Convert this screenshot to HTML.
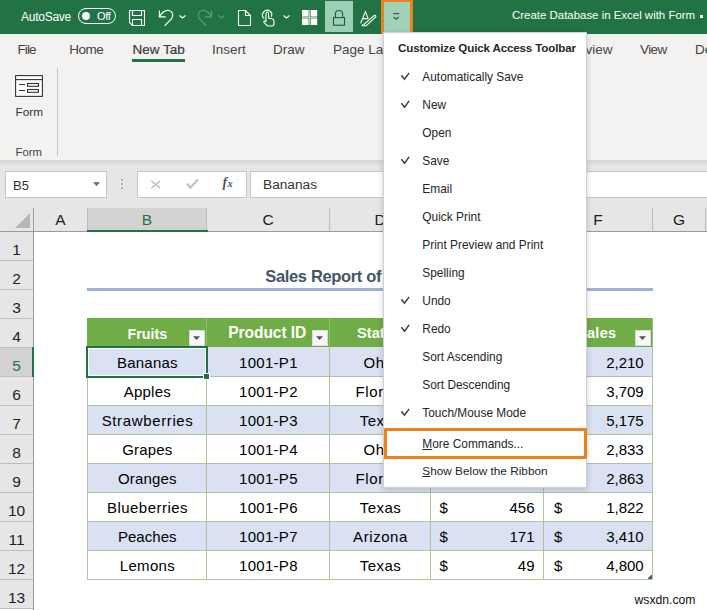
<!DOCTYPE html><html><head><meta charset="utf-8"><style>
html,body{margin:0;padding:0;}
body{width:707px;height:610px;overflow:hidden;position:relative;background:#fff;font-family:"Liberation Sans", sans-serif;}
.t{position:absolute;white-space:nowrap;line-height:1;}
.b{position:absolute;box-sizing:border-box;}
svg{position:absolute;overflow:visible;}
</style></head><body>
<div class="b" style="left:0px;top:0px;width:707px;height:34px;background:#217346"></div>
<div class="t" style="left:21px;top:11.00px;font-size:12px;color:#fff;font-weight:normal;letter-spacing:-0.25px">AutoSave</div>
<div class="b" style="left:78px;top:8px;width:38px;height:16px;border:1.3px solid #fff;border-radius:8px"></div>
<div class="b" style="left:82px;top:12px;width:8px;height:8px;background:#fff;border-radius:50%"></div>
<div class="t" style="left:97px;top:10.95px;font-size:11px;color:#fff;font-weight:normal;letter-spacing:-0.3px">Off</div>
<svg style="left:0;top:0" width="707" height="34">
<g fill="none" stroke="#fff" stroke-width="1.1">
<path d="M129.5 10.5 H144.5 V25.5 H132.5 L129.5 22.5 Z"/>
<path d="M132.5 10.5 V15.5 H141.5 V10.5"/>
<path d="M132.5 25.5 V19.5 H141.5 V25.5"/>
</g>
<g fill="none" stroke="#fff" stroke-width="1.2">
<path d="M159.4 10.6 V16.8 H165.8"/>
<path d="M159.7 16.5 C162 12.5 165.5 10.2 168.8 10.5 C172.6 11 174 15.5 171.6 18.6 L164.6 25.9"/>
<path d="M179.5 15.5 L182.5 18 L185.5 15.5"/>
</g>
<g fill="none" stroke="#55a077" stroke-width="1.2">
<path d="M211.6 10.6 V16.8 H205.2"/>
<path d="M211.3 16.5 C209 12.5 205.5 10.2 202.2 10.5 C198.4 11 197 15.5 199.4 18.6 L206.4 25.9"/>
<path d="M218.5 15.5 L221.5 18 L224.5 15.5"/>
</g>
<g fill="none" stroke="#fff" stroke-width="1.1">
<path d="M238.5 10.5 H245.5 L250.5 15.5 V25.5 H238.5 Z"/>
<path d="M245.5 10.5 V15.5 H250.5"/>
</g>
<g fill="none" stroke="#fff" stroke-width="1.1">
<path d="M264.3 18.5 A4.6 4.6 0 1 1 271.3 16.8"/>
<path d="M266 22 V13.2 C266 11.6 268.6 11.6 268.6 13.2 V18 L272 18.8 C273.5 19.1 274 20 274 21.3 V23.8 C274 25.3 273 26 271.8 26 H267.6 L264.2 22.6 C263.2 21.6 264.6 20.2 266 21.4"/>
<path d="M283.5 15.5 L286.5 18 L289.5 15.5"/>
</g>
<g fill="#fff">
<rect x="302" y="10" width="6.6" height="6.6"/><rect x="310.6" y="10" width="6.6" height="6.6"/>
<rect x="302" y="18.4" width="6.6" height="6.6"/><rect x="310.6" y="18.4" width="6.6" height="6.6"/>
<rect x="309.2" y="10" width="0.8" height="15" opacity="0.8"/><rect x="302" y="17.1" width="15.2" height="0.8" opacity="0.8"/>
</g>
</svg>
<div class="b" style="left:325px;top:1px;width:28px;height:31px;background:#9ccfb3"></div>
<svg style="left:0;top:0" width="707" height="34">
<g fill="none" stroke="#1f5c3a" stroke-width="1.1">
<rect x="333.5" y="17.6" width="11" height="7.6"/>
<path d="M335.4 17.6 V14 C335.4 9.4 342.6 9.4 342.6 14 V17.6"/>
</g>
<g fill="none" stroke="#fff" stroke-width="1.1">
<path d="M360.6 23.4 L365.4 11.6 L368.2 18.6 M362.8 18.6 H368.4"/>
<path d="M364.2 24.2 L374 15.6 C375.2 14.7 376.4 15.6 375.6 16.9 L366.6 25.4 C365.4 26.3 363.6 25.4 364.2 24.2 Z"/>
<path d="M363.2 24.6 C361.5 24.8 361.8 25.9 364 26.2"/>
</g>
</svg>
<div class="b" style="left:381px;top:-1px;width:32px;height:36.5px;background:#9fd2b6;border:3px solid #f0801e;border-radius:2px"></div>
<svg style="left:0;top:0" width="707" height="34">
<g fill="none" stroke="#1f5c3a" stroke-width="1.1">
<path d="M393.2 13.6 H399.2"/>
<path d="M393.6 16.8 L396.2 19.2 L398.8 16.8"/>
</g></svg>
<div class="t" style="left:512px;top:9.87px;font-size:11.45px;color:#fff;font-weight:normal;">Create Database in Excel with Form</div>
<div class="b" style="left:700px;top:15px;width:3px;height:3px;background:#fff"></div>
<div class="b" style="left:0px;top:34px;width:707px;height:126px;background:#f3f2f1"></div>
<div class="t" style="right:94.5px;top:42.92px;font-size:13.5px;color:#444;font-weight:normal;text-align:right;">Review</div>
<div class="t" style="left:17.5px;top:42.92px;font-size:13.5px;color:#444;font-weight:normal;letter-spacing:-0.9px">File</div>
<div class="t" style="left:69.3px;top:42.92px;font-size:13.5px;color:#444;font-weight:normal;letter-spacing:-0.5px">Home</div>
<div class="t" style="left:132.4px;top:42.92px;font-size:13.5px;color:#3a3a3a;font-weight:normal;-webkit-text-stroke:0.2px #3a3a3a">New Tab</div>
<div class="t" style="left:212px;top:42.92px;font-size:13.5px;color:#444;font-weight:normal;">Insert</div>
<div class="t" style="left:273px;top:42.92px;font-size:13.5px;color:#444;font-weight:normal;">Draw</div>
<div class="t" style="left:333px;top:42.92px;font-size:13.5px;color:#444;font-weight:normal;">Page Layout</div>
<div class="t" style="left:640px;top:42.92px;font-size:13.5px;color:#444;font-weight:normal;letter-spacing:-0.6px">View</div>
<div class="t" style="left:695px;top:42.92px;font-size:13.5px;color:#444;font-weight:normal;">Developer</div>
<div class="b" style="left:132px;top:59px;width:53px;height:3px;background:#217346"></div>
<svg style="left:0;top:0" width="707" height="170">
<g fill="#fff" stroke="#333" stroke-width="1.1">
<rect x="15.6" y="75.6" width="26.8" height="20.8"/>
<path d="M15.6 79.6 H42.4"/>
<path d="M19 84.5 H25 M19 90.5 H25"/>
<rect x="27.6" y="83.5" width="10.8" height="2.8"/>
<rect x="27.6" y="89.5" width="10.8" height="2.8"/>
</g></svg>
<div class="t" style="left:15.5px;top:106.77px;font-size:11.8px;color:#333;font-weight:normal;">Form</div>
<div class="t" style="left:15.5px;top:146.50px;font-size:11.3px;color:#444;font-weight:normal;">Form</div>
<div class="b" style="left:57px;top:68px;width:1px;height:88px;background:#c8c6c4"></div>
<div class="b" style="left:0px;top:160px;width:707px;height:71px;background:#e6e6e6"></div>
<div class="b" style="left:0px;top:160px;width:707px;height:6px;background:linear-gradient(#d4d4d4,#e6e6e6)"></div>
<div class="b" style="left:5px;top:171px;width:102px;height:27px;background:#fff;border:1px solid #c6c6c6"></div>
<div class="t" style="left:13px;top:178.95px;font-size:13px;color:#333;font-weight:normal;">B5</div>
<svg style="left:0;top:0" width="707" height="240">
<path d="M93 182.2 H100 L96.5 186 Z" fill="#666"/>
<g fill="#999"><circle cx="122" cy="180" r="0.9"/><circle cx="122" cy="184" r="0.9"/><circle cx="122" cy="188" r="0.9"/></g>
</svg>
<div class="b" style="left:137px;top:171px;width:110px;height:27px;background:#fff;border:1px solid #c6c6c6"></div>
<svg style="left:0;top:0" width="707" height="240">
<g fill="none" stroke="#c3c3c3" stroke-width="1.6">
<path d="M151.2 180.8 L160.2 188.2 M160.2 180.8 L151.2 188.2" stroke-width="1.6"/>
<path d="M186.8 183.6 L190.4 187.6 L198 179.6" stroke-width="2.2"/>
</g></svg>
<div class="t" style="left:222.5px;top:175.90px;font-size:14px;color:#555;font-weight:normal;font-family:'Liberation Serif',serif"><b><i>f</i></b></div>
<div class="t" style="left:227.6px;top:178.88px;font-size:10.5px;color:#555;font-weight:normal;font-family:'Liberation Serif',serif"><b><i>x</i></b></div>
<div class="b" style="left:250px;top:171px;width:460px;height:27px;background:#fff;border:1px solid #c6c6c6"></div>
<div class="t" style="left:263px;top:178.35px;font-size:13.7px;color:#333;font-weight:normal;">Bananas</div>
<div class="b" style="left:0px;top:208px;width:33px;height:23px;background:#e6e6e6"></div>
<div class="b" style="left:33px;top:208px;width:54px;height:23px;background:#e6e6e6"></div>
<div class="b" style="left:87px;top:208px;width:119px;height:23px;background:#d2d2d2"></div>
<div class="b" style="left:206px;top:208px;width:123px;height:23px;background:#e6e6e6"></div>
<div class="b" style="left:329px;top:208px;width:101px;height:23px;background:#e6e6e6"></div>
<div class="b" style="left:430px;top:208px;width:113px;height:23px;background:#e6e6e6"></div>
<div class="b" style="left:543px;top:208px;width:109px;height:23px;background:#e6e6e6"></div>
<div class="b" style="left:652px;top:208px;width:53px;height:23px;background:#e6e6e6"></div>
<div class="b" style="left:705px;top:208px;width:55px;height:23px;background:#e6e6e6"></div>
<div class="b" style="left:33px;top:208px;width:1px;height:23px;background:#9b9b9b"></div>
<div class="b" style="left:87px;top:208px;width:1px;height:23px;background:#bdbdbd"></div>
<div class="t" style="left:33.5px;width:54.0px;text-align:center;top:211.82px;font-size:15.5px;color:#222;font-weight:normal;">A</div>
<div class="b" style="left:206px;top:208px;width:1px;height:23px;background:#bdbdbd"></div>
<div class="t" style="left:87.5px;width:119.0px;text-align:center;top:211.82px;font-size:15.5px;color:#217346;font-weight:normal;">B</div>
<div class="b" style="left:329px;top:208px;width:1px;height:23px;background:#bdbdbd"></div>
<div class="t" style="left:206.5px;width:123.0px;text-align:center;top:211.82px;font-size:15.5px;color:#222;font-weight:normal;">C</div>
<div class="b" style="left:430px;top:208px;width:1px;height:23px;background:#bdbdbd"></div>
<div class="t" style="left:329.5px;width:101.0px;text-align:center;top:211.82px;font-size:15.5px;color:#222;font-weight:normal;">D</div>
<div class="b" style="left:543px;top:208px;width:1px;height:23px;background:#bdbdbd"></div>
<div class="t" style="left:430.5px;width:113.0px;text-align:center;top:211.82px;font-size:15.5px;color:#222;font-weight:normal;">E</div>
<div class="b" style="left:652px;top:208px;width:1px;height:23px;background:#bdbdbd"></div>
<div class="t" style="left:543.5px;width:109.0px;text-align:center;top:211.82px;font-size:15.5px;color:#222;font-weight:normal;">F</div>
<div class="b" style="left:705px;top:208px;width:1px;height:23px;background:#bdbdbd"></div>
<div class="t" style="left:652.5px;width:53.0px;text-align:center;top:211.82px;font-size:15.5px;color:#222;font-weight:normal;">G</div>
<div class="b" style="left:760px;top:208px;width:1px;height:23px;background:#bdbdbd"></div>
<div class="t" style="left:705.5px;width:55.0px;text-align:center;top:211.82px;font-size:15.5px;color:#222;font-weight:normal;">H</div>
<div class="b" style="left:0px;top:231px;width:707px;height:1px;background:#9b9b9b"></div>
<div class="b" style="left:87px;top:230px;width:121px;height:2px;background:#217346"></div>
<svg style="left:0;top:0" width="40" height="240"><path d="M15 228 L30 213 V228 Z" fill="#b7b7b7"/></svg>
<div class="b" style="left:0px;top:232px;width:33px;height:29px;background:#e6e6e6"></div>
<div class="b" style="left:0px;top:260px;width:33px;height:1px;background:#bdbdbd"></div>
<div class="t" style="left:0px;width:33px;text-align:center;top:241.82px;font-size:15.5px;color:#222;font-weight:normal;">1</div>
<div class="b" style="left:0px;top:261px;width:33px;height:29px;background:#e6e6e6"></div>
<div class="b" style="left:0px;top:289px;width:33px;height:1px;background:#bdbdbd"></div>
<div class="t" style="left:0px;width:33px;text-align:center;top:270.82px;font-size:15.5px;color:#222;font-weight:normal;">2</div>
<div class="b" style="left:0px;top:290px;width:33px;height:29px;background:#e6e6e6"></div>
<div class="b" style="left:0px;top:318px;width:33px;height:1px;background:#bdbdbd"></div>
<div class="t" style="left:0px;width:33px;text-align:center;top:299.82px;font-size:15.5px;color:#222;font-weight:normal;">3</div>
<div class="b" style="left:0px;top:319px;width:33px;height:29px;background:#e6e6e6"></div>
<div class="b" style="left:0px;top:347px;width:33px;height:1px;background:#bdbdbd"></div>
<div class="t" style="left:0px;width:33px;text-align:center;top:328.82px;font-size:15.5px;color:#222;font-weight:normal;">4</div>
<div class="b" style="left:0px;top:348px;width:33px;height:29px;background:#d2d2d2"></div>
<div class="b" style="left:0px;top:376px;width:33px;height:1px;background:#bdbdbd"></div>
<div class="t" style="left:0px;width:33px;text-align:center;top:357.82px;font-size:15.5px;color:#217346;font-weight:normal;">5</div>
<div class="b" style="left:0px;top:377px;width:33px;height:29px;background:#e6e6e6"></div>
<div class="b" style="left:0px;top:405px;width:33px;height:1px;background:#bdbdbd"></div>
<div class="t" style="left:0px;width:33px;text-align:center;top:386.82px;font-size:15.5px;color:#222;font-weight:normal;">6</div>
<div class="b" style="left:0px;top:406px;width:33px;height:29px;background:#e6e6e6"></div>
<div class="b" style="left:0px;top:434px;width:33px;height:1px;background:#bdbdbd"></div>
<div class="t" style="left:0px;width:33px;text-align:center;top:415.82px;font-size:15.5px;color:#222;font-weight:normal;">7</div>
<div class="b" style="left:0px;top:435px;width:33px;height:29px;background:#e6e6e6"></div>
<div class="b" style="left:0px;top:463px;width:33px;height:1px;background:#bdbdbd"></div>
<div class="t" style="left:0px;width:33px;text-align:center;top:444.82px;font-size:15.5px;color:#222;font-weight:normal;">8</div>
<div class="b" style="left:0px;top:464px;width:33px;height:29px;background:#e6e6e6"></div>
<div class="b" style="left:0px;top:492px;width:33px;height:1px;background:#bdbdbd"></div>
<div class="t" style="left:0px;width:33px;text-align:center;top:473.82px;font-size:15.5px;color:#222;font-weight:normal;">9</div>
<div class="b" style="left:0px;top:493px;width:33px;height:29px;background:#e6e6e6"></div>
<div class="b" style="left:0px;top:521px;width:33px;height:1px;background:#bdbdbd"></div>
<div class="t" style="left:0px;width:33px;text-align:center;top:502.82px;font-size:15.5px;color:#222;font-weight:normal;">10</div>
<div class="b" style="left:0px;top:522px;width:33px;height:29px;background:#e6e6e6"></div>
<div class="b" style="left:0px;top:550px;width:33px;height:1px;background:#bdbdbd"></div>
<div class="t" style="left:0px;width:33px;text-align:center;top:531.83px;font-size:15.5px;color:#222;font-weight:normal;">11</div>
<div class="b" style="left:0px;top:551px;width:33px;height:29px;background:#e6e6e6"></div>
<div class="b" style="left:0px;top:579px;width:33px;height:1px;background:#bdbdbd"></div>
<div class="t" style="left:0px;width:33px;text-align:center;top:560.83px;font-size:15.5px;color:#222;font-weight:normal;">12</div>
<div class="b" style="left:0px;top:580px;width:33px;height:29px;background:#e6e6e6"></div>
<div class="b" style="left:0px;top:608px;width:33px;height:1px;background:#bdbdbd"></div>
<div class="t" style="left:0px;width:33px;text-align:center;top:589.83px;font-size:15.5px;color:#222;font-weight:normal;">13</div>
<div class="b" style="left:33px;top:231px;width:1px;height:379px;background:#9b9b9b"></div>
<div class="b" style="left:32px;top:347px;width:2px;height:30px;background:#217346"></div>
<div class="t" style="left:265.3px;top:268.18px;font-size:16.5px;color:#44546a;font-weight:bold;letter-spacing:-0.35px">Sales Report of Fruits</div>
<div class="b" style="left:87px;top:288px;width:566px;height:3px;background:#9db2da"></div>
<div class="b" style="left:87px;top:318px;width:566px;height:29px;background:#70ad47"></div>
<div class="b" style="left:87px;top:347px;width:566px;height:29px;background:#d9e1f2"></div>
<div class="b" style="left:87px;top:376px;width:566px;height:29px;background:#ffffff"></div>
<div class="b" style="left:87px;top:405px;width:566px;height:29px;background:#d9e1f2"></div>
<div class="b" style="left:87px;top:434px;width:566px;height:29px;background:#ffffff"></div>
<div class="b" style="left:87px;top:463px;width:566px;height:29px;background:#d9e1f2"></div>
<div class="b" style="left:87px;top:492px;width:566px;height:29px;background:#ffffff"></div>
<div class="b" style="left:87px;top:521px;width:566px;height:29px;background:#d9e1f2"></div>
<div class="b" style="left:87px;top:550px;width:566px;height:29px;background:#ffffff"></div>
<div class="b" style="left:87px;top:376px;width:566px;height:1px;background:#aec29c"></div>
<div class="b" style="left:87px;top:405px;width:566px;height:1px;background:#aec29c"></div>
<div class="b" style="left:87px;top:434px;width:566px;height:1px;background:#aec29c"></div>
<div class="b" style="left:87px;top:463px;width:566px;height:1px;background:#aec29c"></div>
<div class="b" style="left:87px;top:492px;width:566px;height:1px;background:#aec29c"></div>
<div class="b" style="left:87px;top:521px;width:566px;height:1px;background:#aec29c"></div>
<div class="b" style="left:87px;top:550px;width:566px;height:1px;background:#aec29c"></div>
<div class="b" style="left:87px;top:579px;width:566px;height:1px;background:#aec29c"></div>
<div class="b" style="left:87px;top:347px;width:1px;height:233px;background:#aec29c"></div>
<div class="b" style="left:206px;top:347px;width:1px;height:233px;background:#aec29c"></div>
<div class="b" style="left:206px;top:318px;width:1px;height:29px;background:#8fc06b"></div>
<div class="b" style="left:329px;top:347px;width:1px;height:233px;background:#aec29c"></div>
<div class="b" style="left:329px;top:318px;width:1px;height:29px;background:#8fc06b"></div>
<div class="b" style="left:430px;top:347px;width:1px;height:233px;background:#aec29c"></div>
<div class="b" style="left:430px;top:318px;width:1px;height:29px;background:#8fc06b"></div>
<div class="b" style="left:543px;top:347px;width:1px;height:233px;background:#aec29c"></div>
<div class="b" style="left:543px;top:318px;width:1px;height:29px;background:#8fc06b"></div>
<div class="b" style="left:652px;top:318px;width:1px;height:262px;background:#aec29c"></div>
<div class="b" style="left:652px;top:318px;width:1px;height:29px;background:#8fc06b"></div>
<div class="b" style="left:189px;top:329.5px;width:16px;height:16px;background:#f7f7f7;border:1px solid #dcdcdc"></div>
<svg style="left:0;top:0" width="707" height="400"><path d="M193 336.2 H200 L196.5 340 Z" fill="#555"/></svg>
<div class="b" style="left:312px;top:329.5px;width:16px;height:16px;background:#f7f7f7;border:1px solid #dcdcdc"></div>
<svg style="left:0;top:0" width="707" height="400"><path d="M316 336.2 H323 L319.5 340 Z" fill="#555"/></svg>
<div class="b" style="left:413px;top:329.5px;width:16px;height:16px;background:#f7f7f7;border:1px solid #dcdcdc"></div>
<svg style="left:0;top:0" width="707" height="400"><path d="M417 336.2 H424 L420.5 340 Z" fill="#555"/></svg>
<div class="b" style="left:526px;top:329.5px;width:16px;height:16px;background:#f7f7f7;border:1px solid #dcdcdc"></div>
<svg style="left:0;top:0" width="707" height="400"><path d="M530 336.2 H537 L533.5 340 Z" fill="#555"/></svg>
<div class="b" style="left:635px;top:329.5px;width:16px;height:16px;background:#f7f7f7;border:1px solid #dcdcdc"></div>
<svg style="left:0;top:0" width="707" height="400"><path d="M639 336.2 H646 L642.5 340 Z" fill="#555"/></svg>
<div class="t" style="left:127.5px;top:326.54px;font-size:14.3px;color:#fff;font-weight:bold;">Fruits</div>
<div class="t" style="left:228.3px;top:325.44px;font-size:15.6px;color:#fff;font-weight:bold;letter-spacing:-0.1px">Product ID</div>
<div class="t" style="left:357px;top:326.20px;font-size:14.7px;color:#fff;font-weight:bold;">States</div>
<div class="t" style="left:577px;top:326.38px;font-size:14.5px;color:#fff;font-weight:bold;letter-spacing:0.3px">Sales</div>
<div class="t" style="left:87.5px;width:119.5px;text-align:center;top:355.25px;font-size:15px;color:#000;font-weight:normal;letter-spacing:0.23px;text-indent:0.23px">Bananas</div>
<div class="t" style="left:206.5px;width:123.5px;text-align:center;top:355.25px;font-size:15px;color:#000;font-weight:normal;letter-spacing:0.3px;text-indent:0.3px">1001-P1</div>
<div class="t" style="left:329.5px;width:101.5px;text-align:center;top:355.25px;font-size:15px;color:#000;font-weight:normal;letter-spacing:0.6px;text-indent:0.6px">Ohio</div>
<div class="t" style="left:439.5px;top:355.25px;font-size:15px;color:#000;font-weight:normal;">$</div>
<div class="t" style="right:172.5px;top:355.25px;font-size:15px;color:#000;font-weight:normal;text-align:right;">1,134</div>
<div class="t" style="left:554px;top:355.25px;font-size:15px;color:#000;font-weight:normal;">$</div>
<div class="t" style="right:63.299999999999955px;top:355.25px;font-size:15px;color:#000;font-weight:normal;text-align:right;">2,210</div>
<div class="t" style="left:87.5px;width:119.5px;text-align:center;top:384.25px;font-size:15px;color:#000;font-weight:normal;letter-spacing:0.22px;text-indent:0.22px">Apples</div>
<div class="t" style="left:206.5px;width:123.5px;text-align:center;top:384.25px;font-size:15px;color:#000;font-weight:normal;letter-spacing:0.3px;text-indent:0.3px">1001-P2</div>
<div class="t" style="left:329.5px;width:101.5px;text-align:center;top:384.25px;font-size:15px;color:#000;font-weight:normal;letter-spacing:0.58px;text-indent:0.58px">Florida</div>
<div class="t" style="left:439.5px;top:384.25px;font-size:15px;color:#000;font-weight:normal;">$</div>
<div class="t" style="right:172.5px;top:384.25px;font-size:15px;color:#000;font-weight:normal;text-align:right;">2,004</div>
<div class="t" style="left:554px;top:384.25px;font-size:15px;color:#000;font-weight:normal;">$</div>
<div class="t" style="right:63.299999999999955px;top:384.25px;font-size:15px;color:#000;font-weight:normal;text-align:right;">3,709</div>
<div class="t" style="left:87.5px;width:119.5px;text-align:center;top:413.25px;font-size:15px;color:#000;font-weight:normal;letter-spacing:0.64px;text-indent:0.64px">Strawberries</div>
<div class="t" style="left:206.5px;width:123.5px;text-align:center;top:413.25px;font-size:15px;color:#000;font-weight:normal;letter-spacing:0.3px;text-indent:0.3px">1001-P3</div>
<div class="t" style="left:329.5px;width:101.5px;text-align:center;top:413.25px;font-size:15px;color:#000;font-weight:normal;letter-spacing:0.4px;text-indent:0.4px">Texas</div>
<div class="t" style="left:439.5px;top:413.25px;font-size:15px;color:#000;font-weight:normal;">$</div>
<div class="t" style="right:172.5px;top:413.25px;font-size:15px;color:#000;font-weight:normal;text-align:right;">3,098</div>
<div class="t" style="left:554px;top:413.25px;font-size:15px;color:#000;font-weight:normal;">$</div>
<div class="t" style="right:63.299999999999955px;top:413.25px;font-size:15px;color:#000;font-weight:normal;text-align:right;">5,175</div>
<div class="t" style="left:87.5px;width:119.5px;text-align:center;top:442.25px;font-size:15px;color:#000;font-weight:normal;letter-spacing:0.18px;text-indent:0.18px">Grapes</div>
<div class="t" style="left:206.5px;width:123.5px;text-align:center;top:442.25px;font-size:15px;color:#000;font-weight:normal;letter-spacing:0.3px;text-indent:0.3px">1001-P4</div>
<div class="t" style="left:329.5px;width:101.5px;text-align:center;top:442.25px;font-size:15px;color:#000;font-weight:normal;letter-spacing:0.6px;text-indent:0.6px">Ohio</div>
<div class="t" style="left:439.5px;top:442.25px;font-size:15px;color:#000;font-weight:normal;">$</div>
<div class="t" style="right:172.5px;top:442.25px;font-size:15px;color:#000;font-weight:normal;text-align:right;">1,890</div>
<div class="t" style="left:554px;top:442.25px;font-size:15px;color:#000;font-weight:normal;">$</div>
<div class="t" style="right:63.299999999999955px;top:442.25px;font-size:15px;color:#000;font-weight:normal;text-align:right;">2,833</div>
<div class="t" style="left:87.5px;width:119.5px;text-align:center;top:471.25px;font-size:15px;color:#000;font-weight:normal;letter-spacing:0.15px;text-indent:0.15px">Oranges</div>
<div class="t" style="left:206.5px;width:123.5px;text-align:center;top:471.25px;font-size:15px;color:#000;font-weight:normal;letter-spacing:0.3px;text-indent:0.3px">1001-P5</div>
<div class="t" style="left:329.5px;width:101.5px;text-align:center;top:471.25px;font-size:15px;color:#000;font-weight:normal;letter-spacing:0.58px;text-indent:0.58px">Florida</div>
<div class="t" style="left:439.5px;top:471.25px;font-size:15px;color:#000;font-weight:normal;">$</div>
<div class="t" style="right:172.5px;top:471.25px;font-size:15px;color:#000;font-weight:normal;text-align:right;">1,765</div>
<div class="t" style="left:554px;top:471.25px;font-size:15px;color:#000;font-weight:normal;">$</div>
<div class="t" style="right:63.299999999999955px;top:471.25px;font-size:15px;color:#000;font-weight:normal;text-align:right;">2,863</div>
<div class="t" style="left:87.5px;width:119.5px;text-align:center;top:500.25px;font-size:15px;color:#000;font-weight:normal;letter-spacing:0.47px;text-indent:0.47px">Blueberries</div>
<div class="t" style="left:206.5px;width:123.5px;text-align:center;top:500.25px;font-size:15px;color:#000;font-weight:normal;letter-spacing:0.3px;text-indent:0.3px">1001-P6</div>
<div class="t" style="left:329.5px;width:101.5px;text-align:center;top:500.25px;font-size:15px;color:#000;font-weight:normal;letter-spacing:0.4px;text-indent:0.4px">Texas</div>
<div class="t" style="left:439.5px;top:500.25px;font-size:15px;color:#000;font-weight:normal;">$</div>
<div class="t" style="right:172.5px;top:500.25px;font-size:15px;color:#000;font-weight:normal;text-align:right;">456</div>
<div class="t" style="left:554px;top:500.25px;font-size:15px;color:#000;font-weight:normal;">$</div>
<div class="t" style="right:63.299999999999955px;top:500.25px;font-size:15px;color:#000;font-weight:normal;text-align:right;">1,822</div>
<div class="t" style="left:87.5px;width:119.5px;text-align:center;top:529.25px;font-size:15px;color:#000;font-weight:normal;letter-spacing:0.05px;text-indent:0.05px">Peaches</div>
<div class="t" style="left:206.5px;width:123.5px;text-align:center;top:529.25px;font-size:15px;color:#000;font-weight:normal;letter-spacing:0.3px;text-indent:0.3px">1001-P7</div>
<div class="t" style="left:329.5px;width:101.5px;text-align:center;top:529.25px;font-size:15px;color:#000;font-weight:normal;letter-spacing:0.57px;text-indent:0.57px">Arizona</div>
<div class="t" style="left:439.5px;top:529.25px;font-size:15px;color:#000;font-weight:normal;">$</div>
<div class="t" style="right:172.5px;top:529.25px;font-size:15px;color:#000;font-weight:normal;text-align:right;">171</div>
<div class="t" style="left:554px;top:529.25px;font-size:15px;color:#000;font-weight:normal;">$</div>
<div class="t" style="right:63.299999999999955px;top:529.25px;font-size:15px;color:#000;font-weight:normal;text-align:right;">3,410</div>
<div class="t" style="left:87.5px;width:119.5px;text-align:center;top:558.25px;font-size:15px;color:#000;font-weight:normal;letter-spacing:0.32px;text-indent:0.32px">Lemons</div>
<div class="t" style="left:206.5px;width:123.5px;text-align:center;top:558.25px;font-size:15px;color:#000;font-weight:normal;letter-spacing:0.3px;text-indent:0.3px">1001-P8</div>
<div class="t" style="left:329.5px;width:101.5px;text-align:center;top:558.25px;font-size:15px;color:#000;font-weight:normal;letter-spacing:0.4px;text-indent:0.4px">Texas</div>
<div class="t" style="left:439.5px;top:558.25px;font-size:15px;color:#000;font-weight:normal;">$</div>
<div class="t" style="right:172.5px;top:558.25px;font-size:15px;color:#000;font-weight:normal;text-align:right;">49</div>
<div class="t" style="left:554px;top:558.25px;font-size:15px;color:#000;font-weight:normal;">$</div>
<div class="t" style="right:63.299999999999955px;top:558.25px;font-size:15px;color:#000;font-weight:normal;text-align:right;">4,800</div>
<div class="b" style="left:86px;top:346px;width:122px;height:32px;border:2px solid #217346"></div>
<div class="b" style="left:88px;top:348px;width:118px;height:28px;border:1px solid #fff"></div>
<div class="b" style="left:203px;top:373px;width:7px;height:7px;background:#217346;border:1px solid #fff"></div>
<svg style="left:0;top:0" width="707" height="610"><path d="M648 579 L648 578 L651 575 L652 575 V579 Z" fill="#4a5aa0"/></svg>
<div class="t" style="left:634.5px;top:594.13px;font-size:12.2px;color:#111;font-weight:normal;">wsxdn.com</div>
<div class="b" style="left:383px;top:32px;width:204px;height:456px;background:#fff;border:1px solid #d0d0d0;box-shadow:0 2px 6px rgba(0,0,0,0.18)"></div>
<div class="t" style="left:398px;top:42.44px;font-size:11.6px;color:#262626;font-weight:bold;letter-spacing:-0.15px">Customize Quick Access Toolbar</div>
<div class="t" style="left:422.3px;top:72.09px;font-size:11.9px;color:#262626;font-weight:normal;">Automatically Save</div>
<div class="t" style="left:422.3px;top:100.09px;font-size:11.9px;color:#262626;font-weight:normal;">New</div>
<div class="t" style="left:422.3px;top:128.08px;font-size:11.9px;color:#262626;font-weight:normal;">Open</div>
<div class="t" style="left:422.3px;top:156.08px;font-size:11.9px;color:#262626;font-weight:normal;">Save</div>
<div class="t" style="left:422.3px;top:184.08px;font-size:11.9px;color:#262626;font-weight:normal;">Email</div>
<div class="t" style="left:422.3px;top:212.08px;font-size:11.9px;color:#262626;font-weight:normal;">Quick Print</div>
<div class="t" style="left:422.3px;top:240.08px;font-size:11.9px;color:#262626;font-weight:normal;">Print Preview and Print</div>
<div class="t" style="left:422.3px;top:268.08px;font-size:11.9px;color:#262626;font-weight:normal;">Spelling</div>
<div class="t" style="left:422.3px;top:296.08px;font-size:11.9px;color:#262626;font-weight:normal;">Undo</div>
<div class="t" style="left:422.3px;top:324.08px;font-size:11.9px;color:#262626;font-weight:normal;">Redo</div>
<div class="t" style="left:422.3px;top:352.08px;font-size:11.9px;color:#262626;font-weight:normal;">Sort Ascending</div>
<div class="t" style="left:422.3px;top:380.08px;font-size:11.9px;color:#262626;font-weight:normal;">Sort Descending</div>
<div class="t" style="left:422.3px;top:408.08px;font-size:11.9px;color:#262626;font-weight:normal;">Touch/Mouse Mode</div>
<svg style="left:0;top:0" width="707" height="610"><g fill="none" stroke="#404040" stroke-width="1.5"><path d="M401.4 75.2 L404.5 79.2 L409.2 72.9"/><path d="M401.4 103.2 L404.5 107.2 L409.2 100.9"/><path d="M401.4 159.2 L404.5 163.2 L409.2 156.89999999999998"/><path d="M401.4 299.2 L404.5 303.2 L409.2 296.9"/><path d="M401.4 327.2 L404.5 331.2 L409.2 324.9"/><path d="M401.4 411.2 L404.5 415.2 L409.2 408.9"/></g></svg>
<div class="b" style="left:383.5px;top:428px;width:203.5px;height:31px;border:3px solid #f0801e;border-radius:1px"></div>
<div class="t" style="left:422.3px;top:439.08px;font-size:11.9px;color:#262626;font-weight:normal;"><u>M</u>ore Commands...</div>
<div class="t" style="left:422.3px;top:466.07px;font-size:11.8px;color:#262626;font-weight:normal;"><u>S</u>how Below the Ribbon</div>
</body></html>
